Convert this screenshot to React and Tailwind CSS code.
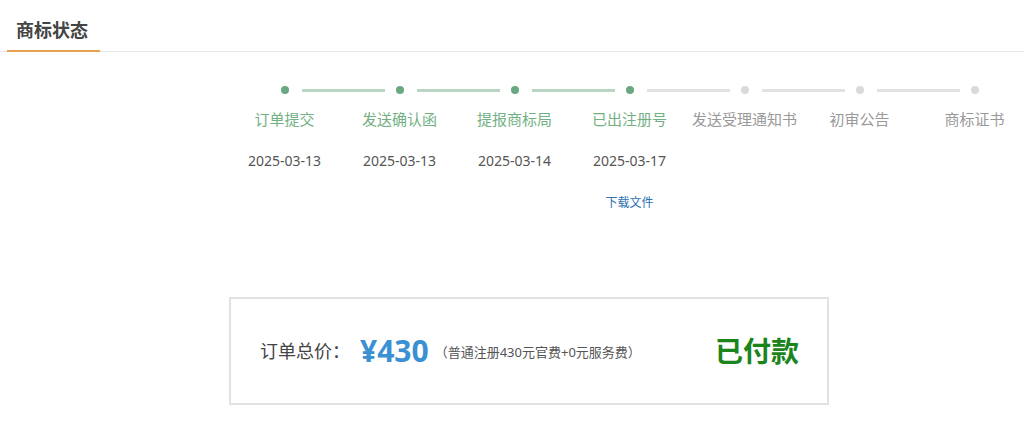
const steps = [
  { name: '订单提交', date: '2025-03-13', done: true },
  { name: '发送确认函', date: '2025-03-13', done: true },
  { name: '提报商标局', date: '2025-03-14', done: true },
  { name: '已出注册号', date: '2025-03-17', done: true, file: true },
  { name: '发送受理通知书', done: false },
  { name: '初审公告', done: false },
  { name: '商标证书', done: false },
];

function StepTrack() {
  return (
    <div className="flex items-center pl-[281px] h-2">
      {steps.map((s, i) => (
        <div key={s.name} className="flex items-center shrink-0">
          <div className={s.done ? 'w-2 h-2 rounded-full bg-[#6aa880]' : 'w-2 h-2 rounded-full bg-[#dadada]'} />
          {i < steps.length - 1 && (
            <div
              className={
                steps[i + 1].done
                  ? 'ml-[13px] mr-[11px] w-[83px] h-[3px] bg-[#bad6c3]'
                  : 'ml-[13px] mr-[11px] w-[83px] h-[3px] bg-[#e2e2e2]'
              }
            />
          )}
        </div>
      ))}
    </div>
  );
}

export default function App() {
  return (
    <div
      className="w-[1024px] h-[440px] bg-white overflow-hidden"
      style={{ fontFamily: '"Noto Sans", "Noto Sans CJK SC", sans-serif' }}
    >
      <div className="flex border-b border-[#e6e6e6] pl-[7px]">
        <div className="pl-[9px] pr-[12px] pt-[17px] pb-[7px] -mb-px border-b-2 border-[#e9a24c] text-[18px] leading-[26px] font-bold text-[#444]">
          商标状态
        </div>
      </div>

      <div className="pt-[34px]">
        <StepTrack />
        <div className="flex pl-[227px] pt-[15px]">
          {steps.map((s) => (
            <div key={s.name} className="w-[115px] shrink-0 flex flex-col items-center">
              <div className={s.done ? 'text-[15px] leading-[20px] text-[#72b083] whitespace-nowrap' : 'text-[15px] leading-[20px] text-[#999] whitespace-nowrap'}>
                {s.name}
              </div>
              <div className="h-[20px] mt-[22px] text-[14px] leading-[20px] text-[#555]">{s.date}</div>
              {s.file && (
                <a href="#" className="mt-[23px] text-[12px] leading-[18px] text-[#2e72b6]">
                  下载文件
                </a>
              )}
            </div>
          ))}
        </div>
      </div>

      <div className="ml-[229px] mt-[85px] w-[600px] h-[108px] border-2 border-[#e2e2e2] flex items-center justify-between pl-[29px] pr-[28px]">
        <div className="flex items-center">
          <span className="text-[18px] text-[#444]">订单总价：</span>
          <span className="ml-[10px] text-[30px] leading-none font-bold text-[#3a90d2]">¥430</span>
          <span className="ml-[6px] text-[13px] text-[#555] pt-[3px]">（普通注册430元官费+0元服务费）</span>
        </div>
        <span className="text-[28px] font-bold text-[#1b841b]">已付款</span>
      </div>
    </div>
  );
}
